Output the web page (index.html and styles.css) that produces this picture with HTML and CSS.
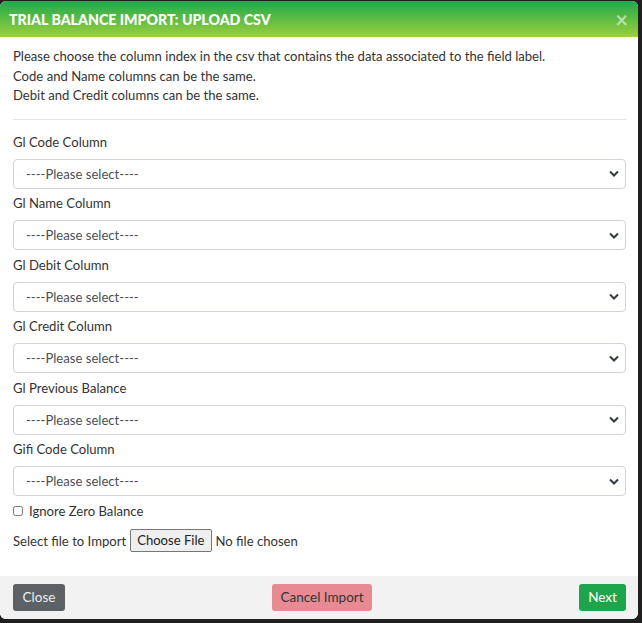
FILE: index.html
```html
<!DOCTYPE html>
<html>
<head>
<meta charset="utf-8">
<link rel="stylesheet" href="styles.css">
</head>
<body>
<div class="modal">
  <div class="modal-header">
    <h5 class="modal-title">TRIAL BALANCE IMPORT: UPLOAD CSV</h5>
    <span class="close">&times;</span>
  </div>
  <div class="modal-body">
    <div class="intro">
      <p>Please choose the column index in the csv that contains the data associated to the field label.</p>
      <p>Code and Name columns can be the same.</p>
      <p>Debit and Credit columns can be the same.</p>
    </div>
    <hr>
    <div class="field">
      <label>Gl Code Column</label>
      <select><option>----Please select----</option></select>
    </div>
    <div class="field">
      <label>Gl Name Column</label>
      <select><option>----Please select----</option></select>
    </div>
    <div class="field">
      <label>Gl Debit Column</label>
      <select><option>----Please select----</option></select>
    </div>
    <div class="field">
      <label>Gl Credit Column</label>
      <select><option>----Please select----</option></select>
    </div>
    <div class="field">
      <label>Gl Previous Balance</label>
      <select><option>----Please select----</option></select>
    </div>
    <div class="field">
      <label>Gifi Code Column</label>
      <select><option>----Please select----</option></select>
    </div>
    <div class="check">
      <input type="checkbox" id="izb"><label for="izb">Ignore Zero Balance</label>
    </div>
    <div class="file">
      <span>Select file to Import</span>
      <span class="file-btn">Choose File</span>
      <span>No file chosen</span>
    </div>
  </div>
  <div class="modal-footer">
    <button class="btn btn-close">Close</button>
    <button class="btn btn-cancel">Cancel Import</button>
    <button class="btn btn-next">Next</button>
  </div>
</div>
</body>
</html>
```
FILE: styles.css
```css
* { box-sizing: border-box; }
html, body {
  margin: 0;
  padding: 0;
  background: #1e1f1e;
  font-family: Lato, "Open Sans", sans-serif;
  font-size: 13.1px;
  color: #333;
}
.modal {
  width: 638px;
  margin-top: 1px;
  background: #fff;
  border-radius: 6px;
  overflow: hidden;
}
.modal-header {
  height: 36px;
  background: linear-gradient(to bottom, #1fa94d, #9ccf3b);
  display: flex;
  align-items: center;
  justify-content: space-between;
  padding: 0 10px 0 9px;
}
.modal-title {
  margin: 0;
  color: #fff;
  font-size: 14.2px;
  font-weight: 900;
  letter-spacing: 0;
}
.close {
  color: rgba(255,255,255,0.55);
  font-size: 22px;
  font-weight: 700;
  line-height: 1;
  margin-top: 1px;
}
.modal-body {
  padding: 10px 12px 23px 13px;
}
.intro p {
  margin: 0;
  line-height: 19.5px;
}
hr {
  border: 0;
  border-top: 1px solid #e4e4e4;
  margin: 13px 0 12px;
}
.field label {
  display: block;
  line-height: 20px;
  margin-bottom: 7px;
}
.field select {
  display: block;
  width: 100%;
  height: 30px;
  border: 1px solid #ced4da;
  border-radius: 4px;
  padding: 0 12px;
  font-family: inherit;
  font-size: 13.1px;
  color: #495057;
  background: #fff url("data:image/svg+xml;utf8,<svg xmlns='http://www.w3.org/2000/svg' width='10' height='7' viewBox='0 0 10 7'><path d='M1 1.5 L5 5.5 L9 1.5' fill='none' stroke='%23343a40' stroke-width='2'/></svg>") no-repeat right 6px center;
  appearance: none;
  -webkit-appearance: none;
  margin-bottom: 4.5px;
}
.check {
  display: flex;
  align-items: center;
  height: 20px;
  margin-top: 4px;
}
.check input {
  width: 10px;
  height: 10px;
  margin: 0 6px 0 0;
}
.file {
  display: flex;
  align-items: center;
  gap: 4px;
  margin-top: 8px;
  height: 24px;
}
.file-btn {
  border: 1px solid #767676;
  background: #efefef;
  border-radius: 2px;
  padding: 2px 6px;
  color: #222;
  line-height: 17px;
}
.modal-footer {
  background: #f2f2f2;
  height: 43px;
  display: flex;
  align-items: center;
  justify-content: space-between;
  padding: 0 12px 0 13px;
}
.btn {
  font-family: inherit;
  font-size: 13.5px;
  border: 0;
  border-radius: 3px;
  height: 27px;
  padding: 0;
  white-space: nowrap;
}
.btn-close { background: #5c6166; color: #eee; width: 52px; }
.btn-cancel { background: #e88a94; color: #333; width: 100px; }
.btn-next { background: #1da54b; color: #fff; width: 47px; }
```
